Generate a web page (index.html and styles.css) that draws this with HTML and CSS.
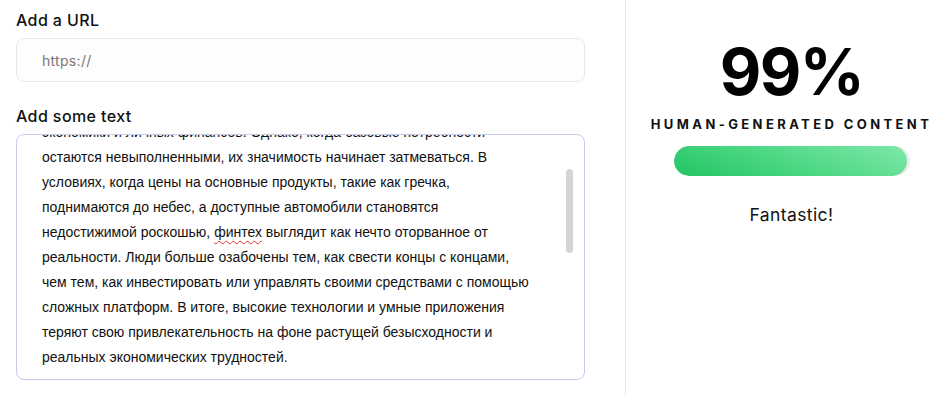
FILE: index.html
```html
<!DOCTYPE html>
<html lang="ru">
<head>
  <meta charset="UTF-8">
  <meta name="viewport" content="width=device-width, initial-scale=1">
  <title>AI Content Detector</title>
  <link rel="stylesheet" href="styles.css">
</head>
<body>
  <div class="page">
    <section class="input-col">
      <label class="field-label">Add a URL</label>
      <div class="url-box">https://</div>

      <label class="field-label text-label">Add some text</label>
      <div class="text-box">
        <div class="text-inner">
          <div>экономики и личных финансов. Однако, когда базовые потребности</div>
          <div>остаются невыполненными, их значимость начинает затмеваться. В</div>
          <div>условиях, когда цены на основные продукты, такие как гречка,</div>
          <div>поднимаются до небес, а доступные автомобили становятся</div>
          <div>недостижимой роскошью, <span class="misspell">финтех</span> выглядит как нечто оторванное от</div>
          <div>реальности. Люди больше озабочены тем, как свести концы с концами,</div>
          <div>чем тем, как инвестировать или управлять своими средствами с помощью</div>
          <div>сложных платформ. В итоге, высокие технологии и умные приложения</div>
          <div>теряют свою привлекательность на фоне растущей безысходности и</div>
          <div>реальных экономических трудностей.</div>
        </div>
        <div class="scroll-thumb"></div>
      </div>
    </section>

    <section class="result-col">
      <div class="score">99%</div>
      <div class="score-label">Human-generated content</div>
      <div class="meter">
        <div class="meter-fill" style="width: 99%"></div>
      </div>
      <div class="verdict">Fantastic!</div>
    </section>
  </div>
</body>
</html>
```

FILE: styles.css
```css
:root {
  --ink: #111111;
  --line: #e6e6e6;
  --focus: #c7cbef;
  --green: #2ecc6e;
}

body {
  margin: 0;
  background: #ffffff;
  color: var(--ink);
  font-family: Inter, 'Noto Sans', sans-serif;
}

.page {
  display: flex;
  height: 395px;
  overflow: hidden;
}

.input-col {
  width: 569px;
  padding: 10px 40px 0 16px;
  border-right: 1px solid var(--line);
  display: flex;
  flex-direction: column;
}

.field-label {
  font-size: 16px;
  font-weight: 500;
  letter-spacing: 0.4px;
  line-height: 20px;
}

.text-label {
  margin-top: 24px;
}

.url-box {
  margin-top: 8px;
  height: 42px;
  border: 1px solid #e8e8e8;
  border-radius: 8px;
  background: #fdfdfd;
  padding-left: 25px;
  display: flex;
  align-items: center;
  font-size: 14px;
  color: #777777;
  letter-spacing: 0.3px;
}

.text-box {
  position: relative;
  margin-top: 8px;
  height: 244px;
  border: 1px solid var(--focus);
  border-radius: 8px;
  overflow: hidden;
  padding: 0 26px 0 25px;
}

.text-inner {
  margin-top: -15px;
  font-family: 'Liberation Sans', Arial, sans-serif;
  font-size: 14px;
  line-height: 25px;
  color: #111111;
  white-space: nowrap;
}

.misspell {
  text-decoration: underline wavy #e03131;
  text-decoration-thickness: 1px;
  text-underline-offset: 3px;
}

.scroll-thumb {
  position: absolute;
  right: 11px;
  top: 34px;
  width: 7px;
  height: 84px;
  border-radius: 4px;
  background: #d4d4d8;
}

.result-col {
  flex: 1;
  display: flex;
  flex-direction: column;
  align-items: center;
  padding-left: 14px;
  padding-top: 37px;
}

.score {
  font-size: 64px;
  font-weight: 700;
  line-height: 70px;
  letter-spacing: -1.5px;
  color: #000000;
}

.score-label {
  margin-top: 9px;
  font-size: 13px;
  font-weight: 700;
  text-transform: uppercase;
  letter-spacing: 3.4px;
  white-space: nowrap;
}

.meter {
  margin-top: 14px;
  width: 236px;
  height: 30px;
  border-radius: 15px;
  background: #ececec;
  overflow: hidden;
}

.meter-fill {
  height: 100%;
  border-radius: 15px;
  background: linear-gradient(20deg, #22c463 0%, #4fd885 50%, #7ee8aa 100%);
}

.verdict {
  margin-top: 28px;
  font-size: 17.5px;
  letter-spacing: 0.4px;
}
```
